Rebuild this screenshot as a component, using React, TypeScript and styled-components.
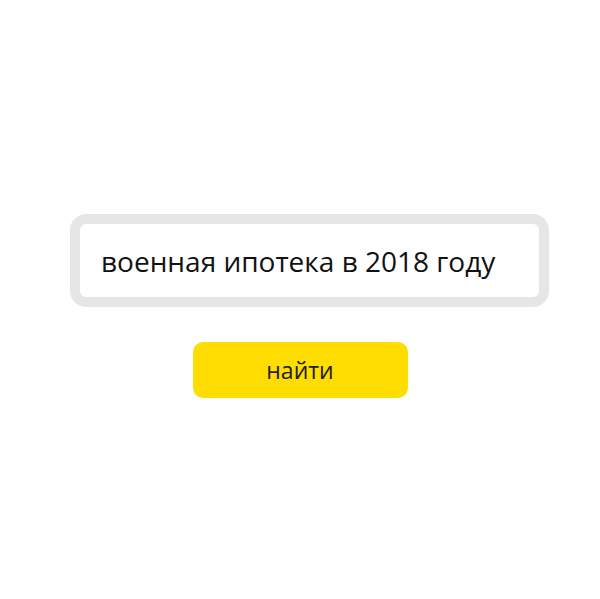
import React from "react";
import styled, { createGlobalStyle } from "styled-components";

const GlobalStyle = createGlobalStyle`
  html, body {
    margin: 0;
    padding: 0;
    background: #fff;
  }
  body {
    font-family: "Open Sans", "Liberation Sans", sans-serif;
  }
`;

const Page = styled.div`
  width: 600px;
  height: 599px;
  display: flex;
  flex-direction: column;
  align-items: center;
  padding-top: 214px;
  box-sizing: border-box;
`;

const SearchBox = styled.div`
  width: 479px;
  height: 93px;
  margin-left: 19px;
  box-sizing: border-box;
  border: 10px solid #e6e6e6;
  border-radius: 16px;
  background: #fff;
  display: flex;
  align-items: center;
  padding-left: 21px;
`;

const SearchText = styled.span`
  font-size: 28px;
  color: #111;
  white-space: nowrap;
`;

const FindButton = styled.button`
  margin-top: 35px;
  width: 215px;
  height: 56px;
  border: none;
  border-radius: 10px;
  background: #ffdd00;
  font-family: "Open Sans", "Liberation Sans", sans-serif;
  font-size: 23px;
  color: #222;
  display: flex;
  align-items: center;
  justify-content: center;
  padding: 0 0 1px;
`;

export default function App() {
  return (
    <>
      <GlobalStyle />
      <Page>
        <SearchBox>
          <SearchText>военная ипотека в 2018 году</SearchText>
        </SearchBox>
        <FindButton>найти</FindButton>
      </Page>
    </>
  );
}
